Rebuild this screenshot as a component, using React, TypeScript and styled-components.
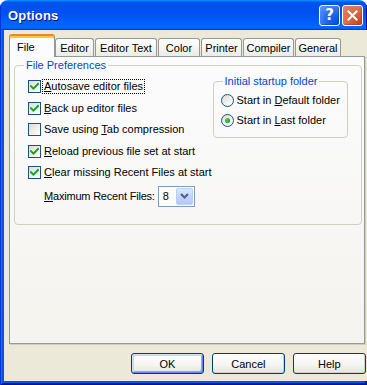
import React from 'react';
import styled, { createGlobalStyle } from 'styled-components';

const GlobalStyle = createGlobalStyle`
    html, body {
        margin: 0;
        padding: 0;
        background: #ffffff;
    }
    body {
        font-family: "Liberation Sans", Tahoma, Arial, sans-serif;
        font-size: 11px;
        color: #000000;
    }
`;

const Window = styled.div`
    width: 367px;
    height: 385px;
    display: flex;
    flex-direction: column;
    border-radius: 8px 8px 0 0;
    overflow: hidden;
`;

const TitleBar = styled.div`
    height: 30px;
    flex: none;
    display: flex;
    align-items: center;
    padding: 0 4px 0 8px;
    background: linear-gradient(180deg, #0997ff 0%, #0053ee 8%, #0050ee 40%, #0066ff 88%, #0066ff 93%, #005bff 95%, #003dd7 96%, #003dd7 100%);
    box-shadow: inset 1px 0 #0831d9, inset -1px 0 #00138c;
`;

const Title = styled.div`
    flex: 1;
    color: #ffffff;
    font-weight: bold;
    font-size: 13px;
    letter-spacing: 0.2px;
    text-shadow: 1px 1px #0f1089;
    padding-top: 1px;
`;

const CaptionButton = styled.div<{ $kind: 'help' | 'close' }>`
    width: 19px;
    height: 19px;
    margin-left: 2px;
    border: 1px solid #ffffff;
    border-radius: 3px;
    display: flex;
    align-items: center;
    justify-content: center;
    color: #ffffff;
    font-weight: bold;
    font-size: 15px;
    font-family: "DejaVu Sans", sans-serif;
    background: ${p => p.$kind === 'close'
        ? 'radial-gradient(circle at 85% 85%, #cc4626 0%, #dc6542 45%, #e2866a 100%)'
        : 'radial-gradient(circle at 85% 85%, #0054e3 0%, #2868e8 45%, #6a9bf5 100%)'};
    box-shadow: inset -1px -1px 1px rgba(0, 0, 0, 0.2);
`;

const Frame = styled.div`
    flex: 1;
    display: flex;
    padding: 0 4px 4px;
    background: #0855dd;
    box-shadow: inset 1px 0 #0831d9, inset -1px 0 #00138c, inset 0 -1px #00138c, inset 2px 0 #166aee, inset -2px 0 #001ea0, inset 0 -2px #001ea0;
`;

const Client = styled.div`
    flex: 1;
    display: flex;
    flex-direction: column;
    background: #ece9d8;
    padding: 5px 6px 7px 5px;
`;

const TabStrip = styled.div`
    display: flex;
    align-items: flex-end;
    height: 22px;
    margin-bottom: -1px;
    position: relative;
    z-index: 1;
`;

const Tab = styled.div<{ $width: number; $active?: boolean }>`
    box-sizing: border-box;
    width: ${p => p.$width}px;
    height: ${p => (p.$active ? 22 : 18)}px;
    margin-right: ${p => (p.$active ? 0 : 1)}px;
    margin-bottom: ${p => (p.$active ? 0 : 1)}px;
    border: 1px solid #919b9c;
    border-bottom: none;
    border-radius: 3px 3px 0 0;
    display: flex;
    align-items: center;
    justify-content: ${p => (p.$active ? 'flex-start' : 'center')};
    padding: ${p => (p.$active ? '0 0 0 7px' : '1px 0 0')};
    background: ${p => (p.$active ? '#fcfcfe' : 'linear-gradient(180deg, #ffffff 0%, #f3f3ef 60%, #ecebe6 100%)')};
    box-shadow: ${p => (p.$active ? 'inset 0 2px #ffc83c, 0 -1px 0 #e68b2c' : 'none')};
    border-top-color: ${p => (p.$active ? '#e68b2c' : '#919b9c')};
`;

const Panel = styled.div`
    flex: 1;
    margin-right: 1px;
    border: 1px solid #919b9c;
    background: linear-gradient(180deg, #fcfcfe 0%, #f4f3ee 100%);
    box-shadow: 1px 1px 0 #d0cebf;
    padding: 1px 2px 0 4px;
`;

const GroupBox = styled.fieldset<{ $legendShift: number }>`
    margin: 0;
    min-width: 0;
    border: 1px solid #d0d0bf;
    border-radius: 4px;
    padding: 2px 13px 17px;

    > legend {
        color: #0046d5;
        line-height: 14px;
        padding: 0 2px;
        margin-left: ${p => p.$legendShift}px;
    }
`;

const GroupBody = styled.div`
    display: flex;
    align-items: flex-start;
`;

const OptionColumn = styled.div`
    flex: 1;
    display: flex;
    flex-direction: column;
    gap: 8.5px;
    padding-top: 6px;
`;

const StartupGroup = styled.fieldset`
    margin: 0;
    width: 131px;
    box-sizing: border-box;
    border: 1px solid #d0d0bf;
    border-radius: 4px;
    padding: 6px 6px 10px 7px;
    display: flex;
    flex-direction: column;
    gap: 7px;

    > legend {
        color: #0046d5;
        line-height: 14px;
        padding: 0 2px;
        margin-left: 2px;
    }
`;

const OptionRow = styled.div`
    display: flex;
    align-items: center;
    height: 13px;
`;

const CheckBox = styled.div`
    box-sizing: border-box;
    width: 13px;
    height: 13px;
    flex: none;
    border: 1px solid #1c5180;
    background: linear-gradient(135deg, #dcdcd7 0%, #ffffff 100%);
    display: flex;
    align-items: center;
    justify-content: center;
`;

const RadioCircle = styled.div<{ $checked?: boolean }>`
    box-sizing: border-box;
    width: 13px;
    height: 13px;
    flex: none;
    border: 1px solid #1c5180;
    border-radius: 50%;
    background: linear-gradient(135deg, #dcdcd7 0%, #ffffff 100%);
    display: flex;
    align-items: center;
    justify-content: center;

    &::after {
        content: '';
        display: ${p => (p.$checked ? 'block' : 'none')};
        width: 5px;
        height: 5px;
        border-radius: 50%;
        background: radial-gradient(circle at 35% 35%, #55d451 0%, #21a121 70%);
    }
`;

const OptionLabel = styled.span<{ $focused?: boolean }>`
    margin-left: 2px;
    padding: 0 1px;
    line-height: 13px;
    white-space: nowrap;
    outline: ${p => (p.$focused ? '1px dotted #000000' : 'none')};
    outline-offset: 0;
`;

const Key = styled.span`
    text-decoration: underline;
`;

const MaxRow = styled.div`
    display: flex;
    align-items: center;
    gap: 3px;
    height: 21px;
    margin: -2px 0 0 16px;
`;

const MaxLabel = styled.span`
    flex: none;
    white-space: nowrap;
    letter-spacing: -0.2px;
`;

const Combo = styled.div`
    box-sizing: border-box;
    flex: none;
    width: 37px;
    height: 21px;
    border: 1px solid #7f9db9;
    background: #ffffff;
    display: flex;
    align-items: stretch;
    padding: 1px;
`;

const ComboValue = styled.div`
    flex: 1;
    display: flex;
    align-items: center;
    padding-left: 3px;
`;

const ComboButton = styled.div`
    width: 15px;
    border: 1px solid #bccdf6;
    border-radius: 2px;
    background: linear-gradient(180deg, #dce7fd 0%, #c3d3fb 50%, #b4c8f7 100%);
    display: flex;
    align-items: center;
    justify-content: center;
`;

const ButtonRow = styled.div`
    display: flex;
    justify-content: flex-end;
    gap: 8px;
    margin-top: 9px;
`;

const PushButton = styled.div<{ $default?: boolean }>`
    box-sizing: border-box;
    width: 73px;
    height: 21px;
    border: 1px solid #003c74;
    border-radius: 3px;
    display: flex;
    align-items: center;
    justify-content: center;
    background: linear-gradient(180deg, #ffffff 0%, #f4f4f0 60%, #e3e2da 100%);
    box-shadow: ${p => (p.$default
        ? 'inset 1px 1px #cee7ff, inset -1px -1px #6982ee, inset 2px 2px #bcd4f6, inset -2px -2px #89ade4'
        : 'inset -1px -1px #d6d0c5')};
`;

const CheckMark = () => (
    <svg width="9" height="9" viewBox="0 0 9 9">
        <path d="M1 4.2 L3.4 6.6 L8 2" fill="none" stroke="#21a121" strokeWidth="2" strokeLinecap="square" />
    </svg>
);

const CloseGlyph = () => (
    <svg width="11" height="11" viewBox="0 0 11 11">
        <path d="M1.5 1.5 L9.5 9.5 M9.5 1.5 L1.5 9.5" stroke="#ffffff" strokeWidth="2" strokeLinecap="square" />
    </svg>
);

const ChevronDown = () => (
    <svg width="9" height="6" viewBox="0 0 9 6">
        <path d="M1 1 L4.5 4.5 L8 1" fill="none" stroke="#4d6185" strokeWidth="2" />
    </svg>
);

const tabs = [
    { label: 'File', width: 46, active: true },
    { label: 'Editor', width: 39 },
    { label: 'Editor Text', width: 62 },
    { label: 'Color', width: 42 },
    { label: 'Printer', width: 41 },
    { label: 'Compiler', width: 51 },
    { label: 'General', width: 46 },
];

type CheckOption = { key: string; rest: string; before?: string; checked: boolean; focused?: boolean };

const checkOptions: CheckOption[] = [
    { key: 'A', rest: 'utosave editor files', checked: true, focused: true },
    { key: 'B', rest: 'ack up editor files', checked: true },
    { before: 'Save using ', key: 'T', rest: 'ab compression', checked: false },
    { key: 'R', rest: 'eload previous file set at start', checked: true },
    { key: 'C', rest: 'lear missing Recent Files at start', checked: true },
];

export default function App() {
    return (
        <>
            <GlobalStyle />
            <Window>
                <TitleBar>
                    <Title>Options</Title>
                    <CaptionButton $kind="help">?</CaptionButton>
                    <CaptionButton $kind="close"><CloseGlyph /></CaptionButton>
                </TitleBar>
                <Frame>
                    <Client>
                        <TabStrip>
                            {tabs.map(tab => (
                                <Tab key={tab.label} $width={tab.width} $active={tab.active}>{tab.label}</Tab>
                            ))}
                        </TabStrip>
                        <Panel>
                            <GroupBox $legendShift={-4}>
                                <legend>File Preferences</legend>
                                <GroupBody>
                                    <OptionColumn>
                                        {checkOptions.map(option => (
                                            <OptionRow key={option.rest}>
                                                <CheckBox>{option.checked && <CheckMark />}</CheckBox>
                                                <OptionLabel $focused={option.focused}>
                                                    {option.before}<Key>{option.key}</Key>{option.rest}
                                                </OptionLabel>
                                            </OptionRow>
                                        ))}
                                        <MaxRow>
                                            <MaxLabel><Key>M</Key>aximum Recent Files:</MaxLabel>
                                            <Combo>
                                                <ComboValue>8</ComboValue>
                                                <ComboButton><ChevronDown /></ComboButton>
                                            </Combo>
                                        </MaxRow>
                                    </OptionColumn>
                                    <StartupGroup>
                                        <legend>Initial startup folder</legend>
                                        <OptionRow>
                                            <RadioCircle />
                                            <OptionLabel>Start in <Key>D</Key>efault folder</OptionLabel>
                                        </OptionRow>
                                        <OptionRow>
                                            <RadioCircle $checked />
                                            <OptionLabel>Start in <Key>L</Key>ast folder</OptionLabel>
                                        </OptionRow>
                                    </StartupGroup>
                                </GroupBody>
                            </GroupBox>
                        </Panel>
                        <ButtonRow>
                            <PushButton $default>OK</PushButton>
                            <PushButton>Cancel</PushButton>
                            <PushButton>Help</PushButton>
                        </ButtonRow>
                    </Client>
                </Frame>
            </Window>
        </>
    );
}
